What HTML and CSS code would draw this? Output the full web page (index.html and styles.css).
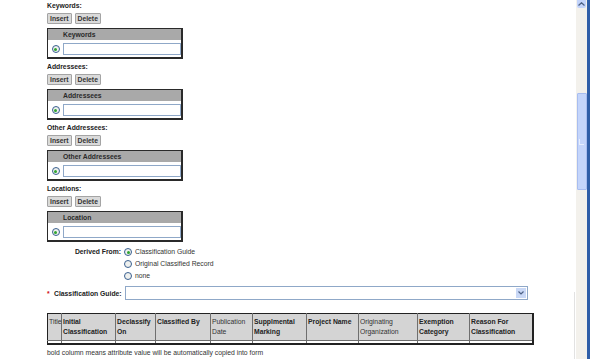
FILE: index.html
```html
<!DOCTYPE html>
<html lang="en">
<head>
  <meta charset="UTF-8" />
  <title>Classification Attributes</title>
  <link rel="stylesheet" href="styles.css">
</head>
<body>
<div class="frame">
  <div class="page">

    <div class="group">
      <div class="label">Keywords:</div>
      <div class="btns"><button class="btn">Insert</button><button class="btn">Delete</button></div>
      <table class="list">
        <tr><th class="sel"></th><th>Keywords</th></tr>
        <tr><td class="sel"><span class="radio on"></span></td><td><input class="field" type="text"></td></tr>
      </table>
    </div>

    <div class="group">
      <div class="label">Addressees:</div>
      <div class="btns"><button class="btn">Insert</button><button class="btn">Delete</button></div>
      <table class="list">
        <tr><th class="sel"></th><th>Addressees</th></tr>
        <tr><td class="sel"><span class="radio on"></span></td><td><input class="field" type="text"></td></tr>
      </table>
    </div>

    <div class="group">
      <div class="label">Other Addressees:</div>
      <div class="btns"><button class="btn">Insert</button><button class="btn">Delete</button></div>
      <table class="list">
        <tr><th class="sel"></th><th>Other Addressees</th></tr>
        <tr><td class="sel"><span class="radio on"></span></td><td><input class="field" type="text"></td></tr>
      </table>
    </div>

    <div class="group">
      <div class="label">Locations:</div>
      <div class="btns"><button class="btn">Insert</button><button class="btn">Delete</button></div>
      <table class="list">
        <tr><th class="sel"></th><th>Location</th></tr>
        <tr><td class="sel"><span class="radio on"></span></td><td><input class="field" type="text"></td></tr>
      </table>
    </div>

    <div class="derived">
      <div class="derived-label">Derived From:</div>
      <div class="options">
        <div class="opt"><span class="radio on"></span>Classification Guide</div>
        <div class="opt"><span class="radio"></span>Original Classified Record</div>
        <div class="opt"><span class="radio"></span>none</div>
      </div>
    </div>

    <div class="guide-row">
      <span class="req">*</span>
      <span class="guide-label">Classification Guide:</span>
      <div class="select">
        <span class="arrow">
          <svg width="6" height="4" viewBox="0 0 6 4"><path d="M0.5 0.5 L3 3 L5.5 0.5" fill="none" stroke="#4d6185" stroke-width="1.2"/></svg>
        </span>
      </div>
    </div>

    <table class="attrs">
      <colgroup>
        <col style="width:14px"><col style="width:54px"><col style="width:40px"><col style="width:55px"><col style="width:42px">
        <col style="width:54px"><col style="width:52px"><col style="width:59px"><col style="width:52px"><col style="width:63px">
      </colgroup>
      <tr>
        <th>Title</th>
        <th class="copy">Initial Classification</th>
        <th class="copy">Declassify On</th>
        <th class="copy">Classified By</th>
        <th>Publication Date</th>
        <th class="copy">Supplmental Marking</th>
        <th class="copy">Project Name</th>
        <th>Originating Organization</th>
        <th class="copy">Exemption Category</th>
        <th class="copy">Reason For Classification</th>
      </tr>
      <tr class="empty"><td></td><td></td><td></td><td></td><td></td><td></td><td></td><td></td><td></td><td></td></tr>
    </table>

    <p class="note">bold column means attribute value will be automatically copied into form</p>
  </div>

  <div class="scrollbar">
    <div class="sb-up">
      <svg width="7" height="4" viewBox="0 0 7 4"><path d="M0.5 3.5 L3.5 0.8 L6.5 3.5" fill="none" stroke="#4d6185" stroke-width="1.3"/></svg>
    </div>
    <div class="sb-thumb"><span class="grip"></span></div>
  </div>
</div>
</body>
</html>
```

FILE: styles.css
```css
body {
  margin: 0;
  font-family: "Liberation Sans", Arial, sans-serif;
  font-size: 6.8px;
  color: #222;
  background-color: #fff;
}
.frame {
  display: flex;
  height: 359px;
  overflow: hidden;
}
.page {
  flex: 1;
  padding-left: 47px;
  position: relative;
}
.page::after {
  content: "";
  position: absolute;
  right: 1px;
  top: 292px;
  bottom: 0;
  width: 1px;
  background: #e2e2e2;
}

/* repeating list groups */
.group {
  height: 61px;
}
.label {
  font-weight: bold;
  height: 12px;
  line-height: 12px;
}
.btns {
  display: flex;
  gap: 3px;
  margin-top: 1px;
}
.btn {
  font: bold 6.8px "Liberation Sans", Arial, sans-serif;
  color: #333;
  height: 11px;
  padding: 0 2px;
  background: #dadada;
  border: 1px solid #a4a4a4;
  border-radius: 1px;
}
.list {
  margin-top: 4px;
  width: 136px;
  border-collapse: collapse;
  border: 1px solid #2a2a2a;
  border-right-width: 2px;
  border-bottom-width: 2px;
}
.list th {
  background: #a9a9a9;
  height: 11px;
  padding: 0;
  text-align: left;
  font-weight: bold;
  color: #2a2a2a;
}
.list td {
  padding: 3px 0 2px 0;
  height: 12px;
}
.list .sel {
  width: 15px;
  text-align: center;
}
.field {
  display: block;
  box-sizing: border-box;
  width: 100%;
  height: 12px;
  margin: 0;
  border: 1px solid #8fa8c8;
  background: #fff;
}

.radio {
  display: inline-block;
  box-sizing: border-box;
  width: 8px;
  height: 8px;
  border-radius: 50%;
  border: 1px solid #3a6090;
  background: #eef0ee;
  vertical-align: middle;
  position: relative;
}
.radio.on::after {
  content: "";
  position: absolute;
  left: 1.5px;
  top: 1.5px;
  width: 3px;
  height: 3px;
  border-radius: 50%;
  background: #2fa52f;
}

/* derived from */
.derived {
  display: flex;
  margin-top: 2px;
}
.derived-label {
  width: 74px;
  text-align: right;
  font-weight: bold;
  line-height: 12px;
}
.options {
  margin-left: 3px;
}
.opt {
  height: 12px;
  line-height: 12px;
  display: flex;
  align-items: center;
  gap: 3px;
  color: #333;
}

/* classification guide */
.guide-row {
  display: flex;
  align-items: center;
  margin-top: 4px;
  height: 14px;
}
.req {
  color: #d01010;
  font-weight: bold;
  width: 7px;
}
.guide-label {
  font-weight: bold;
  width: 71px;
}
.select {
  box-sizing: border-box;
  width: 403px;
  height: 14px;
  border: 1px solid #8fa8c8;
  background: #fff;
  display: flex;
  justify-content: flex-end;
  padding: 1px;
}
.arrow {
  width: 10px;
  background: #c9d8f6;
  display: flex;
  align-items: center;
  justify-content: center;
}

/* attribute table */
.attrs {
  margin-top: 13px;
  table-layout: fixed;
  width: 485px;
  border-collapse: collapse;
  border: 1px solid #222;
  border-right-width: 2px;
  border-bottom-width: 2px;
}
.attrs th {
  background: #d4d4d4;
  border-right: 1px solid #6f6f6f;
  vertical-align: top;
  text-align: left;
  font-weight: normal;
  padding: 3px 1px 3px 1px;
  height: 20px;
  line-height: 10px;
  color: #333;
}
.attrs th.copy {
  font-weight: bold;
  color: #222;
}
.attrs .empty td {
  height: 2px;
  padding: 0;
  border-top: 1px solid #6f6f6f;
  border-right: 1px solid #6f6f6f;
}
.note {
  margin: 3px 0 0 0;
  line-height: 10px;
  color: #333;
}

/* scrollbar */
.scrollbar {
  width: 11px;
  background: #f3f1ec;
  border-right: 3px solid #2f5ea8;
  display: flex;
  flex-direction: column;
  align-items: center;
}
.sb-up {
  width: 9px;
  height: 8px;
  background: #c3d4fb;
  border-radius: 0 0 2px 2px;
  display: flex;
  align-items: center;
  justify-content: center;
}
.sb-thumb {
  box-sizing: border-box;
  width: 10px;
  height: 97px;
  margin-top: 85px;
  background: #c4d5fb;
  border: 1px solid #a8bdf0;
  border-radius: 1px;
  display: flex;
  align-items: center;
  justify-content: center;
}
.grip {
  width: 4px;
  height: 5px;
  border-left: 1px solid #e6eeff;
  border-bottom: 1px solid #e6eeff;
}
```
